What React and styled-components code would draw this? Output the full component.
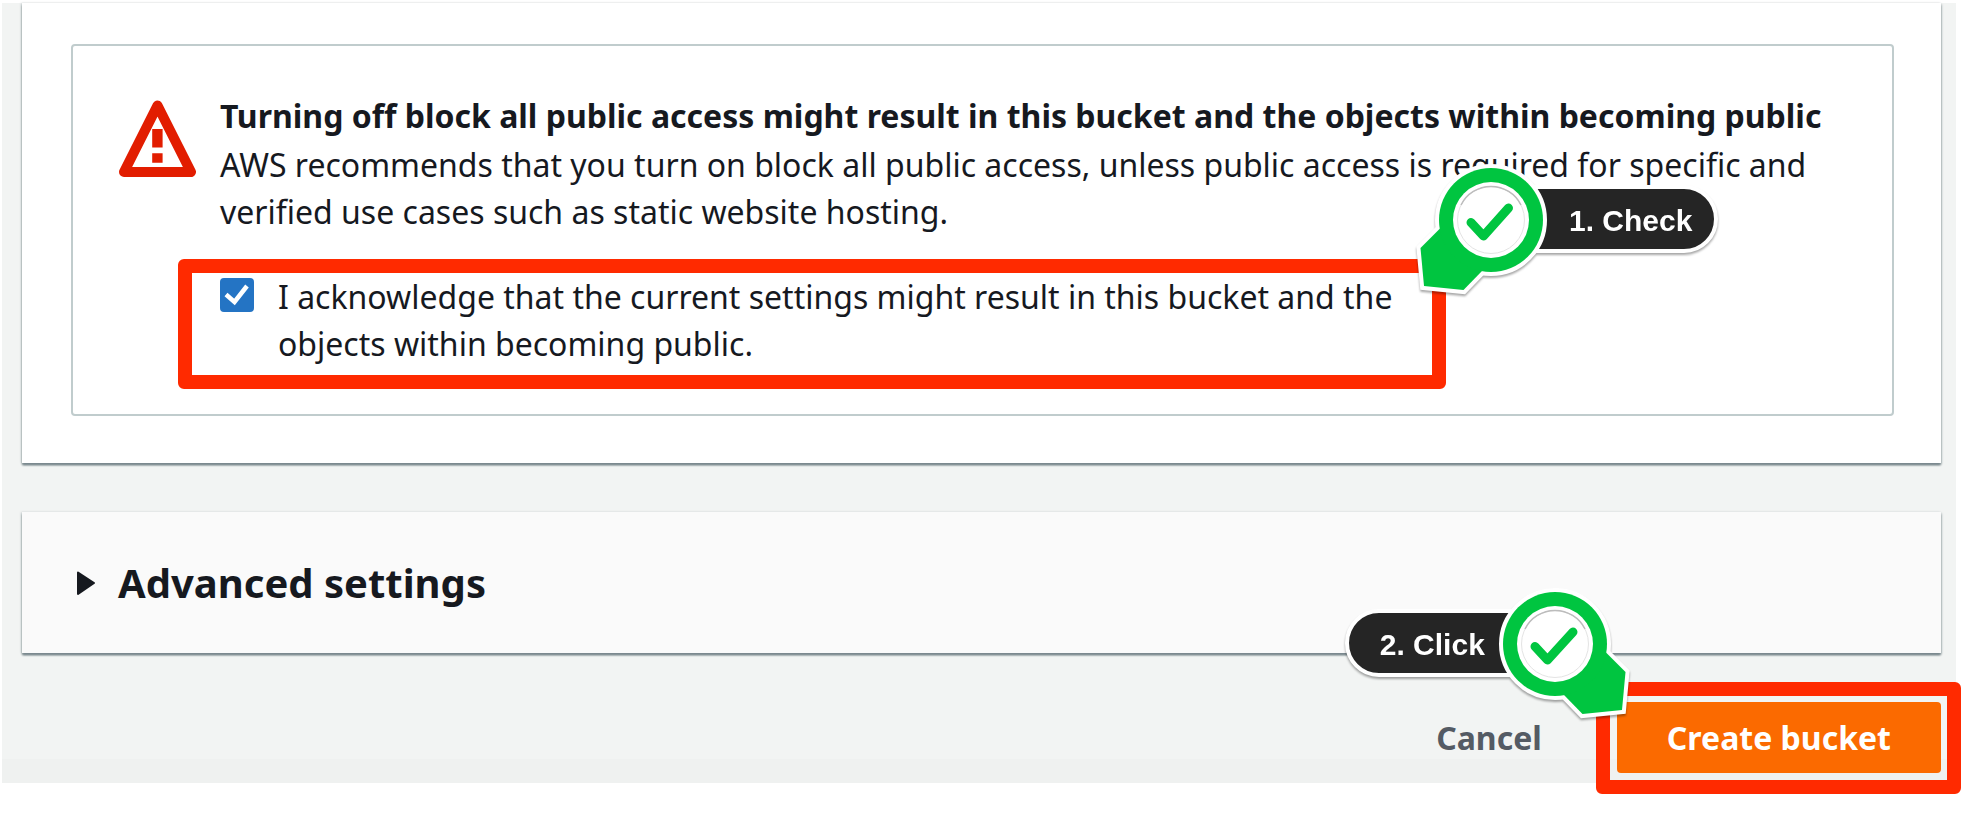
import React, { useState } from "react";
import styled, { createGlobalStyle } from "styled-components";

const GlobalStyle = createGlobalStyle`
  *, *::before, *::after { box-sizing: border-box; }
  body {
    margin: 0;
    background: #fff;
    color: #16191f;
    font-family: "Noto Sans", "Open Sans", sans-serif;
    font-size: 32px;
    line-height: 47px;
  }
`;

const Page = styled.main`
  padding: 3px 6px 53px 2px;
`;

const Surface = styled.div`
  display: flex;
  flex-direction: column;
  gap: 49px;
  padding: 0 15px 0 20px;
  background: linear-gradient(to top, #eff1f0 24px, #f2f4f3 24px);
`;

const Panel = styled.section`
  padding: ${(p) => p.$padding};
  background: ${(p) => p.$background};
  box-shadow: 0 3px 2px -1px #7b898f, 0 2px 2px #879596, 1px 1px 2px #cfd5d6, -1px 0 2px #cfd5d6;
`;

const Alert = styled.div`
  display: flex;
  align-items: flex-start;
  gap: 24px;
  padding: 46px 46px 47px;
  border: 2px solid #c0cccd;
  border-radius: 4px;
`;

const WarningSvg = styled.svg`
  flex: none;
  width: 77px;
  height: 77px;
  margin-top: 8px;
`;

const AlertBody = styled.div`
  flex: 1;
  min-width: 0;
`;

const AlertTitle = styled.h2`
  margin: 0 0 2px;
  font-size: 32px;
  line-height: 47px;
  font-weight: 700;
`;

const AlertText = styled.p`
  margin: 0 0 38px;
`;

const Highlight = styled.div`
  position: relative;
  width: ${(p) => (p.$wide ? "100%" : "auto")};
  max-width: ${(p) => (p.$wide ? "1184px" : "none")};

  &::after {
    content: "";
    position: absolute;
    inset: ${(p) => p.$inset};
    border: 14px solid #ff2a00;
    border-radius: 6px;
    pointer-events: none;
  }
`;

const CheckLabel = styled.label`
  display: flex;
  align-items: flex-start;
  gap: 24px;
  cursor: pointer;
`;

const CheckBoxFrame = styled.span`
  display: grid;
  flex: none;
  width: 34px;
  height: 34px;
  margin-top: 5px;

  & > * { grid-area: 1 / 1; }
`;

const CheckInput = styled.input`
  appearance: none;
  width: 34px;
  height: 34px;
  margin: 0;
  border: 2px solid #687078;
  border-radius: 4px;
  background: #fff;

  &:checked {
    border-color: #2474c4;
    background: #2474c4;
  }
`;

const CheckMark = styled.svg`
  width: 34px;
  height: 34px;
  pointer-events: none;
`;

const Expander = styled.button`
  display: flex;
  align-items: center;
  gap: 22px;
  width: 100%;
  padding: 0;
  border: 0;
  background: none;
  color: inherit;
  font: 700 40px/56px "Noto Sans", "Open Sans", sans-serif;
  text-align: left;
  cursor: pointer;
`;

const Caret = styled.svg`
  flex: none;
  width: 20px;
  height: 26px;
`;

const Actions = styled.footer`
  display: flex;
  justify-content: flex-end;
  align-items: center;
  gap: 25px;
  padding-bottom: 10px;
`;

const Button = styled.button`
  display: block;
  height: 71px;
  padding: 0 50px;
  border: 0;
  border-radius: 4px;
  background: ${(p) => (p.$primary ? "#fb6a00" : "transparent")};
  color: ${(p) => (p.$primary ? "#fff" : "#545b64")};
  font: 700 32px/47px "Noto Sans", "Open Sans", sans-serif;
  white-space: nowrap;
  cursor: pointer;
`;

const Callout = styled.div`
  position: absolute;
  z-index: 1;
  display: flex;
  flex-direction: ${(p) => (p.$side === "right" ? "row" : "row-reverse")};
  align-items: flex-start;
  ${(p) =>
    p.$side === "right"
      ? "left: calc(100% + 10px); top: -127px;"
      : "right: calc(100% - 15px); top: -132px;"}
  filter: drop-shadow(0 2px 1px rgba(0, 0, 0, 0.35));
  pointer-events: none;
`;

const CalloutPin = styled.svg`
  position: relative;
  z-index: 1;
  flex: none;
  width: 134px;
  height: 134px;
`;

const CalloutText = styled.span`
  height: 68px;
  margin: ${(p) => (p.$side === "right" ? "39px 0 0 -40px" : "39px -40px 0 0")};
  padding: ${(p) => (p.$side === "right" ? "0 22px 0 57px" : "0 49px 0 31px")};
  border: 4px solid #fff;
  border-radius: ${(p) => (p.$side === "right" ? "0 34px 34px 0" : "34px 0 0 34px")};
  background: #252525;
  color: #fff;
  font: 700 30px/64px "Liberation Sans", Arial, sans-serif;
  white-space: nowrap;
`;

function WarningIcon() {
  return (
    <WarningSvg viewBox="0 0 77 77" aria-hidden="true">
      <path d="M38.5 5.5 72 72H5Z" fill="none" stroke="#e21d00" strokeWidth="10" strokeLinejoin="round" />
      <path d="M33.2 29h10.4v18.5H33.2zM33.2 53.3h10.4v9.4H33.2z" fill="#e21d00" />
    </WarningSvg>
  );
}

function Marker({ side, children }) {
  const flip = side === "left" ? "translate(134 0) scale(-1 1)" : undefined;
  const tail = "M26 82.5 6.5 102 10 140 49.5 144 68 125Z";
  return (
    <Callout $side={side}>
      <CalloutPin viewBox="0 0 134 134" overflow="visible" aria-hidden="true">
        <g transform={flip}>
          <g fill="#fff" stroke="#fff" strokeWidth="8">
            <path d={tail} />
            <circle cx="77" cy="74" r="52" />
          </g>
          <path d={tail} fill="#00c540" />
          <circle cx="77" cy="74" r="52" fill="#00c540" />
          <circle cx="77" cy="74" r="38" fill="#fff" />
          <circle cx="77" cy="74" r="33.5" fill="none" stroke="#e4e4e4" />
          <path d="M47 59a33.5 33.5 0 0 1 60 0" fill="none" stroke="#bcbcbc" strokeWidth="1.5" />
        </g>
        <path
          d={side === "left" ? "M37 76.5 49.5 90 75 62" : "M57 76.5 69.5 90 94.5 62"}
          fill="none"
          stroke="#00c540"
          strokeWidth="9"
          strokeLinecap="round"
          strokeLinejoin="round"
        />
      </CalloutPin>
      <CalloutText $side={side}>{children}</CalloutText>
    </Callout>
  );
}

export default function App() {
  const [acknowledged, setAcknowledged] = useState(true);
  return (
    <>
      <GlobalStyle />
      <Page>
        <Surface>
          <Panel $padding="41px 47px 47px 49px" $background="#fff">
            <Alert>
              <WarningIcon />
              <AlertBody>
                <AlertTitle>
                  Turning off block all public access might result in this bucket and the objects within becoming public
                </AlertTitle>
                <AlertText>
                  AWS recommends that you turn on block all public access, unless public access is required for specific
                  and verified use cases such as static website hosting.
                </AlertText>
                <Highlight $wide $inset="-14px -42px -22px -42px">
                  <CheckLabel>
                    <CheckBoxFrame>
                      <CheckInput
                        type="checkbox"
                        checked={acknowledged}
                        onChange={(e) => setAcknowledged(e.target.checked)}
                      />
                      <CheckMark viewBox="0 0 34 34" aria-hidden="true">
                        <path d="M6 16.5 14.5 24 27 8" fill="none" stroke="#fff" strokeWidth="4.5" />
                      </CheckMark>
                    </CheckBoxFrame>
                    <span>
                      I acknowledge that the current settings might result in this bucket and the objects within
                      becoming public.
                    </span>
                  </CheckLabel>
                  <Marker side="right">1. Check</Marker>
                </Highlight>
              </AlertBody>
            </Alert>
          </Panel>
          <Panel $padding="43px 52px 42px 54px" $background="#fafafa">
            <Expander type="button" aria-expanded="false">
              <Caret viewBox="0 0 20 26" aria-hidden="true">
                <path d="M2 2.5 18 13 2 24Z" fill="#16191f" stroke="#16191f" strokeWidth="2" strokeLinejoin="round" />
              </Caret>
              Advanced settings
            </Expander>
          </Panel>
          <Actions>
            <Button type="button">Cancel</Button>
            <Highlight $inset="-20px -20px -21px -21px">
              <Button type="button" $primary>
                Create bucket
              </Button>
              <Marker side="left">2. Click</Marker>
            </Highlight>
          </Actions>
        </Surface>
      </Page>
    </>
  );
}
